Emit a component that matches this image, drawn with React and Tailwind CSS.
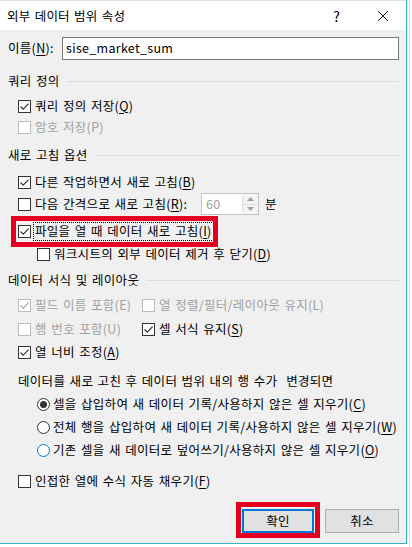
import React from 'react';

const CheckMark = ({ color }) => (
  <svg width="11" height="11" viewBox="0 0 11 11" fill="none">
    <path d="M1.5 5.5 L4.2 8.2 L9.6 2.6" stroke={color} strokeWidth="1.2" />
  </svg>
);

function CheckBox({ checked, disabled }) {
  return (
    <span
      className={`w-[13px] h-[13px] shrink-0 border flex items-center justify-center bg-white ${
        disabled ? 'border-[#bcbcbc]' : 'border-[#333333]'
      }`}
    >
      {checked && <CheckMark color={disabled ? '#a8a8a8' : '#333333'} />}
    </span>
  );
}

function Radio({ checked, hover }) {
  return (
    <span
      className={`w-[13px] h-[13px] shrink-0 rounded-full border flex items-center justify-center bg-white ${
        hover ? 'border-[#0078d7]' : 'border-[#333333]'
      }`}
    >
      {checked && <span className="w-[7px] h-[7px] rounded-full bg-[#333333]" />}
    </span>
  );
}

// mnemonic letter, underlined like a Windows access key
const K = ({ children }) => <span className="underline underline-offset-2">{children}</span>;

function Section({ title, className }) {
  return (
    <div className={`flex items-center h-[20px] pl-[8px] pr-[7px] ${className}`}>
      <span>{title}</span>
      <div className="flex-1 h-px bg-[#dcdcdc] ml-[7px]" />
    </div>
  );
}

function CheckRow({ checked, disabled, children, className = '', indent = 'pl-[18px]' }) {
  return (
    <div className={`flex items-center h-[20px] ${indent} ${className}`}>
      <CheckBox checked={checked} disabled={disabled} />
      <span className={`ml-[4px] ${disabled ? 'text-[#a0a0a0]' : ''}`}>{children}</span>
    </div>
  );
}

function RadioRow({ checked, hover, children, className = '' }) {
  return (
    <div className={`flex items-center h-[20px] pl-[37px] ${className}`}>
      <Radio checked={checked} hover={hover} />
      <span className="ml-[3px]">{children}</span>
    </div>
  );
}

export default function App() {
  return (
    <div className="w-[412px] h-[547px] bg-white flex overflow-hidden font-['Noto_Sans_CJK_KR',sans-serif] text-[12px] leading-none text-black [word-spacing:1.3px]">
      {/* Dialog */}
      <div className="w-[407px] h-[544px] flex flex-col border-r border-b border-[#35b6c6]">
        {/* Title bar */}
        <div className="h-[30px] bg-white flex items-center pl-[7px] border-t border-[#e3e3e3]">
          <span className="flex-1 pt-[1px] text-[12.5px] tracking-[0.2px]">외부 데이터 범위 속성</span>
          <span className="text-[14px] mr-[37px]">?</span>
          <svg width="12" height="12" viewBox="0 0 12 12" className="mr-[17px]">
            <path d="M1 1 L11 11 M11 1 L1 11" stroke="#111" strokeWidth="1" />
          </svg>
        </div>

        {/* Body */}
        <div className="flex-1 bg-[#f0f0f0] flex flex-col pt-[7px] text-[12.5px] tracking-[0.3px]">
          <div className="flex items-center h-[23px]">
            <span className="pl-[8px] w-[62px]">이름(<K>N</K>):</span>
            <div className="w-[337px] h-[23px] border border-[#7a7a7a] bg-white flex items-center pl-[3px]">
              sise_market_sum
            </div>
          </div>

          <Section title="쿼리 정의" className="mt-[11px]" />
          <CheckRow checked className="mt-[5px]">쿼리 정의 저장(<K>Q</K>)</CheckRow>
          <CheckRow disabled className="mt-[1px]">암호 저장(P)</CheckRow>

          <Section title="새로 고침 옵션" className="mt-[8px]" />
          <CheckRow checked className="mt-[7px]">다른 작업하면서 새로 고침(<K>B</K>)</CheckRow>

          <div className="flex items-center h-[20px] pl-[18px] mt-[2px]">
            <CheckBox />
            <span className="ml-[4px] w-[166px]">다음 간격으로 새로 고침(<K>R</K>):</span>
            <div className="w-[58px] h-[22px] border border-[#c4c4c4] bg-white flex">
              <span className="flex-1 flex items-center pl-[4px] text-[#a0a0a0]">60</span>
              <div className="w-[16px] flex flex-col border-l border-[#e0e0e0] bg-[#f4f4f4]">
                <div className="flex-1 flex items-center justify-center border-b border-[#dcdcdc]">
                  <svg width="7" height="4" viewBox="0 0 7 4"><path d="M0 4 L3.5 0 L7 4Z" fill="#a0a0a0" /></svg>
                </div>
                <div className="flex-1 flex items-center justify-center">
                  <svg width="7" height="4" viewBox="0 0 7 4"><path d="M0 0 L3.5 4 L7 0Z" fill="#a0a0a0" /></svg>
                </div>
              </div>
            </div>
            <span className="ml-[6px]">분</span>
          </div>

          <div className="relative flex items-center h-[20px] pl-[18px] mt-[7px]">
            <CheckBox checked />
            <span className="ml-[2px] h-[19px] flex items-center px-[1px] border border-dotted border-black">
              파일을 열 때 데이터 새로 고침(<K>I</K>)
            </span>
            <div className="absolute left-[11px] top-[-5px] w-[207px] h-[31px] border-[5px] border-[#e60020]" />
          </div>
          <CheckRow className="mt-[3px]" indent="pl-[37px]">워크시트의 외부 데이터 제거 후 닫기(<K>D</K>)</CheckRow>

          <Section title="데이터 서식 및 레이아웃" className="mt-[6px]" />
          <div className="flex items-center h-[20px] pl-[18px] mt-[5px]">
            <div className="w-[124px] flex items-center">
              <CheckBox checked disabled />
              <span className="ml-[4px] text-[#a0a0a0]">필드 이름 포함(E)</span>
            </div>
            <CheckBox disabled />
            <span className="ml-[4px] text-[#a0a0a0]">열 정렬/필터/레이아웃 유지(L)</span>
          </div>
          <div className="flex items-center h-[20px] pl-[18px] mt-[4px]">
            <div className="w-[124px] flex items-center">
              <CheckBox disabled />
              <span className="ml-[4px] text-[#a0a0a0]">행 번호 포함(U)</span>
            </div>
            <CheckBox checked />
            <span className="ml-[4px]">셀 서식 유지(<K>S</K>)</span>
          </div>
          <CheckRow checked className="mt-[3px]">열 너비 조정(<K>A</K>)</CheckRow>

          <div className="flex items-center h-[20px] pl-[18px] mt-[9px]">
            데이터를 새로 고친 후 데이터 범위 내의 행 수가&nbsp; 변경되면
          </div>
          <RadioRow checked className="mt-[3px]">셀을 삽입하여 새 데이터 기록/사용하지 않은 셀 지우기(<K>C</K>)</RadioRow>
          <RadioRow className="mt-[3px]">전체 행을 삽입하여 새 데이터 기록/사용하지 않은 셀 지우기(<K>W</K>)</RadioRow>
          <RadioRow hover className="mt-[3px]">기존 셀을 새 데이터로 덮어쓰기/사용하지 않은 셀 지우기(<K>O</K>)</RadioRow>

          <CheckRow className="mt-[11px]">인접한 열에 수식 자동 채우기(<K>F</K>)</CheckRow>

          <div className="flex justify-end items-center pr-[7px] mt-[18px] gap-[11px]">
            <div className="relative">
              <button className="w-[72px] h-[24px] bg-[#e1e1e1] border-2 border-[#0078d7] flex items-center justify-center">
                확인
              </button>
              <div className="absolute left-[-6px] top-[-7px] w-[84px] h-[36px] border-[5px] border-[#e60020]" />
            </div>
            <button className="w-[74px] h-[24px] bg-[#e1e1e1] border border-[#adadad] flex items-center justify-center">
              취소
            </button>
          </div>
        </div>
      </div>

      {/* Spreadsheet strip behind the dialog */}
      <div className="flex-1 flex">
        <div className="ml-[2px] w-px h-full bg-[#dadada]" />
      </div>
    </div>
  );
}
